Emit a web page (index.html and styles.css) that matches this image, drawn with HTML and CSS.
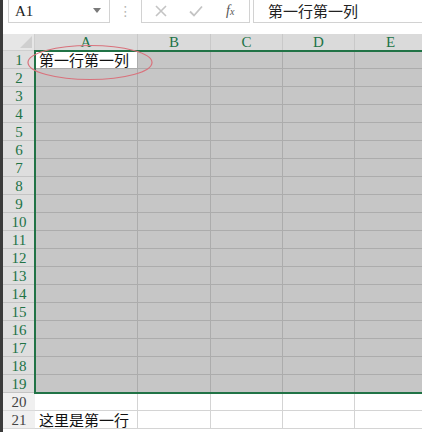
FILE: index.html
```html
<!DOCTYPE html>
<html>
<head>
<meta charset="utf-8">
<link rel="stylesheet" href="styles.css">
</head>
<body>
<div class="app">
  <div class="edge"></div>
  <div class="main">
    <div class="toolbar">
      <div class="namebox">
        <span class="nb-text">A1</span>
        <svg class="nb-arrow" width="8" height="5" viewBox="0 0 8 5"><path d="M0 0 H8 L4 5 Z" fill="#7a7a7a"/></svg>
      </div>
      <div class="dots">⋮</div>
      <div class="btns">
        <svg class="ico" width="14" height="14" viewBox="0 0 14 14"><path d="M2 2 L12 12 M12 2 L2 12" stroke="#c4c4c4" stroke-width="1.6" fill="none"/></svg>
        <svg class="ico" width="16" height="14" viewBox="0 0 16 14"><path d="M2 7.5 L6 11.5 L14 2.5" stroke="#c4c4c4" stroke-width="1.8" fill="none"/></svg>
        <span class="fx">f<small>x</small></span>
      </div>
      <div class="formula">第一行第一列</div>
    </div>
    <div class="sheet">
      <div class="corner"><svg width="12" height="12" viewBox="0 0 12 12"><path d="M12 0 V12 H0 Z" fill="#cfcfcf"/></svg></div>
      <div class="ch sel-h">A</div>
      <div class="ch sel-h">B</div>
      <div class="ch sel-h">C</div>
      <div class="ch sel-h">D</div>
      <div class="ch sel-h">E</div>

      <div class="rh sel-h">1</div><div class="c active">第一行第一列</div><div class="c sel"></div><div class="c sel"></div><div class="c sel"></div><div class="c sel"></div>
      <div class="rh sel-h">2</div><div class="c sel"></div><div class="c sel"></div><div class="c sel"></div><div class="c sel"></div><div class="c sel"></div>
      <div class="rh sel-h">3</div><div class="c sel"></div><div class="c sel"></div><div class="c sel"></div><div class="c sel"></div><div class="c sel"></div>
      <div class="rh sel-h">4</div><div class="c sel"></div><div class="c sel"></div><div class="c sel"></div><div class="c sel"></div><div class="c sel"></div>
      <div class="rh sel-h">5</div><div class="c sel"></div><div class="c sel"></div><div class="c sel"></div><div class="c sel"></div><div class="c sel"></div>
      <div class="rh sel-h">6</div><div class="c sel"></div><div class="c sel"></div><div class="c sel"></div><div class="c sel"></div><div class="c sel"></div>
      <div class="rh sel-h">7</div><div class="c sel"></div><div class="c sel"></div><div class="c sel"></div><div class="c sel"></div><div class="c sel"></div>
      <div class="rh sel-h">8</div><div class="c sel"></div><div class="c sel"></div><div class="c sel"></div><div class="c sel"></div><div class="c sel"></div>
      <div class="rh sel-h">9</div><div class="c sel"></div><div class="c sel"></div><div class="c sel"></div><div class="c sel"></div><div class="c sel"></div>
      <div class="rh sel-h">10</div><div class="c sel"></div><div class="c sel"></div><div class="c sel"></div><div class="c sel"></div><div class="c sel"></div>
      <div class="rh sel-h">11</div><div class="c sel"></div><div class="c sel"></div><div class="c sel"></div><div class="c sel"></div><div class="c sel"></div>
      <div class="rh sel-h">12</div><div class="c sel"></div><div class="c sel"></div><div class="c sel"></div><div class="c sel"></div><div class="c sel"></div>
      <div class="rh sel-h">13</div><div class="c sel"></div><div class="c sel"></div><div class="c sel"></div><div class="c sel"></div><div class="c sel"></div>
      <div class="rh sel-h">14</div><div class="c sel"></div><div class="c sel"></div><div class="c sel"></div><div class="c sel"></div><div class="c sel"></div>
      <div class="rh sel-h">15</div><div class="c sel"></div><div class="c sel"></div><div class="c sel"></div><div class="c sel"></div><div class="c sel"></div>
      <div class="rh sel-h">16</div><div class="c sel"></div><div class="c sel"></div><div class="c sel"></div><div class="c sel"></div><div class="c sel"></div>
      <div class="rh sel-h">17</div><div class="c sel"></div><div class="c sel"></div><div class="c sel"></div><div class="c sel"></div><div class="c sel"></div>
      <div class="rh sel-h">18</div><div class="c sel"></div><div class="c sel"></div><div class="c sel"></div><div class="c sel"></div><div class="c sel"></div>
      <div class="rh sel-h">19</div><div class="c sel"></div><div class="c sel"></div><div class="c sel"></div><div class="c sel"></div><div class="c sel"></div>
      <div class="rh">20</div><div class="c"></div><div class="c"></div><div class="c"></div><div class="c"></div><div class="c"></div>
      <div class="rh">21</div><div class="c">这里是第一行</div><div class="c"></div><div class="c"></div><div class="c"></div><div class="c"></div>

      <div class="selbox"></div>
      <svg class="mark" width="130" height="40" viewBox="0 0 130 40"><ellipse cx="65" cy="19.5" rx="62" ry="17" fill="none" stroke="#d9727c" stroke-width="1.2"/></svg>
    </div>
  </div>
</div>
</body>
</html>
```

FILE: styles.css
```css
html, body {
  margin: 0;
  padding: 0;
  background: #ffffff;
  overflow: hidden;
}
.app {
  display: flex;
  width: 422px;
  height: 432px;
  overflow: hidden;
}
.edge {
  width: 3px;
  flex: none;
  background: #3b3b3b;
}
.main {
  flex: 1;
  min-width: 0;
  display: flex;
  flex-direction: column;
  overflow: hidden;
}
.toolbar {
  display: flex;
  align-items: center;
  height: 24px;
  margin-top: -1px;
  margin-bottom: 11px;
  padding-left: 5px;
}
.toolbar > * { flex: none; }
.namebox {
  box-sizing: border-box;
  width: 102px;
  height: 24px;
  border: 1px solid #d2d2d2;
  display: flex;
  align-items: center;
  justify-content: space-between;
  padding: 1px 8px 0 6px;
}
.nb-text {
  font-family: "Liberation Serif", serif;
  font-size: 15px;
  color: #222;
}
.nb-arrow { margin-top: -2px; }
.dots {
  width: 31px;
  text-align: center;
  color: #b8b8b8;
  font-family: "DejaVu Sans", sans-serif;
  font-size: 14px;
}
.btns {
  box-sizing: border-box;
  width: 109px;
  height: 24px;
  border: 1px solid #d2d2d2;
  display: flex;
  align-items: center;
  padding-left: 12px;
  gap: 20px;
}
.fx {
  font-family: "Liberation Serif", serif;
  font-style: italic;
  font-size: 14px;
  color: #555;
  margin-left: 2px;
}
.fx small { font-size: 10px; }
.formula {
  box-sizing: border-box;
  width: 180px;
  height: 24px;
  margin-left: 3px;
  border: 1px solid #d2d2d2;
  padding-left: 14px;
  font-family: "Noto Sans CJK SC", sans-serif;
  font-size: 15px;
  line-height: 21px;
  color: #222;
}
.sheet {
  position: relative;
  display: grid;
  grid-template-columns: 32px 103px 73px 72px 72px 72px;
  grid-template-rows: 17px repeat(21, 18px);
}
.sheet > div {
  box-sizing: border-box;
}
.corner {
  background: #e6e6e6;
  border-right: 1px solid #cfcfcf;
  border-bottom: 1px solid #cfcfcf;
  display: flex;
  align-items: flex-end;
  justify-content: flex-end;
  padding: 0 2px 2px 0;
}
.corner svg { display: block; }
.ch {
  background: #e6e6e6;
  border-right: 1px solid #c9c9c9;
  text-align: center;
  font-family: "Liberation Serif", serif;
  font-size: 15px;
  line-height: 17px;
  color: #444;
}
.rh {
  background: #f0f0f0;
  border-bottom: 1px solid #d9d9d9;
  text-align: center;
  font-family: "Liberation Serif", serif;
  font-size: 15px;
  line-height: 18px;
  color: #444;
}
.ch.sel-h { background: #dadada; color: #217346; }
.rh.sel-h { background: #dedede; color: #217346; border-bottom-color: #c4c4c4; }
.c {
  background: #ffffff;
  border-right: 1px solid #d4d4d4;
  border-bottom: 1px solid #d4d4d4;
  font-family: "Noto Sans CJK SC", sans-serif;
  font-size: 15px;
  line-height: 17px;
  color: #111;
  padding-left: 4px;
  white-space: nowrap;
}
.c.sel {
  background: #c6c6c6;
  border-right-color: #acacac;
  border-bottom-color: #acacac;
}
.c.active {
  background: #ffffff;
  border-right-color: #acacac;
  border-bottom-color: #acacac;
}
.selbox {
  position: absolute;
  left: 31px;
  top: 16px;
  width: 400px;
  height: 344px;
  border: 2px solid #217346;
  pointer-events: none;
}
.mark {
  position: absolute;
  left: 22px;
  top: 9px;
}
```
